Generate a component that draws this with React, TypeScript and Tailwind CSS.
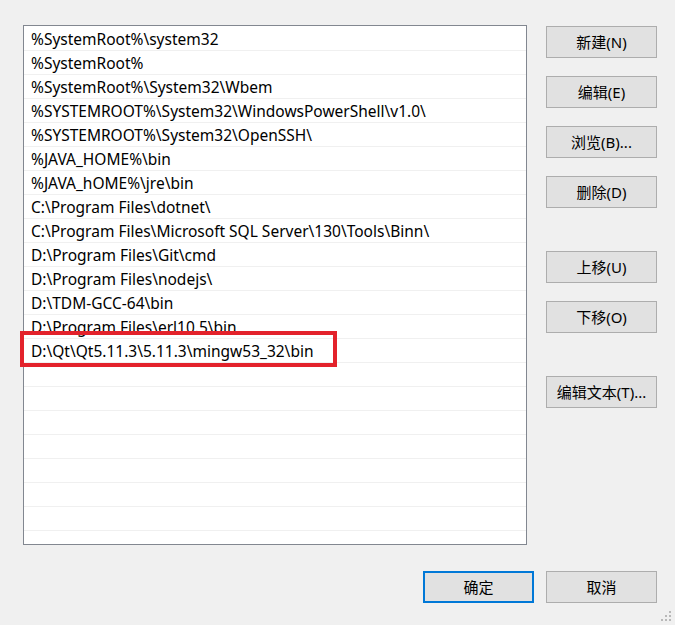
import React from 'react'

const paths = [
  '%SystemRoot%\\system32',
  '%SystemRoot%',
  '%SystemRoot%\\System32\\Wbem',
  '%SYSTEMROOT%\\System32\\WindowsPowerShell\\v1.0\\',
  '%SYSTEMROOT%\\System32\\OpenSSH\\',
  '%JAVA_HOME%\\bin',
  '%JAVA_hOME%\\jre\\bin',
  'C:\\Program Files\\dotnet\\',
  'C:\\Program Files\\Microsoft SQL Server\\130\\Tools\\Binn\\',
  'D:\\Program Files\\Git\\cmd',
  'D:\\Program Files\\nodejs\\',
  'D:\\TDM-GCC-64\\bin',
  'D:\\Program Files\\erl10.5\\bin',
  'D:\\Qt\\Qt5.11.3\\5.11.3\\mingw53_32\\bin',
  '', '', '', '', '', '', '', '',
]

const font = { fontFamily: '"Noto Sans", "Noto Sans CJK SC", sans-serif' }

function Btn({ label, primary, className = '' }: { label: string; primary?: boolean; className?: string }) {
  return (
    <button
      className={
        'w-[111px] h-[32px] bg-[#e1e1e1] text-[15px] text-black flex items-center justify-center ' +
        (primary ? 'border-2 border-[#0078d7] ' : 'border border-[#adadad] ') +
        className
      }
      style={font}
    >
      {label}
    </button>
  )
}

function Grip() {
  const dots = [
    [8, 0],
    [4, 4], [8, 4],
    [0, 8], [4, 8], [8, 8],
  ]
  return (
    <svg width="12" height="12" viewBox="0 0 12 12" className="absolute right-[3px] bottom-[3px]">
      {dots.map(([x, y]) => (
        <rect key={`${x}-${y}`} x={x + 1} y={y + 1} width="2" height="2" fill="#b8b8b8" />
      ))}
    </svg>
  )
}

export default function App() {
  return (
    <div className="relative w-[675px] h-[625px] bg-[#f0f0f0] overflow-hidden" style={font}>
      <div className="flex pl-[23px] pt-[25px]">
        <div className="w-[504px] h-[520px] bg-white border border-[#828790] overflow-hidden pt-px">
          {paths.map((p, i) => (
            <div
              key={i}
              className="h-[24px] border-b border-[#f0f0f0] pl-[7px] pt-[2px] flex items-center text-[15.5px] text-black leading-none whitespace-nowrap"
            >
              {p}
            </div>
          ))}
        </div>

        <div className="ml-[19px] pt-px flex flex-col">
          <Btn label="新建(N)" />
          <Btn label="编辑(E)" className="mt-[18px]" />
          <Btn label="浏览(B)..." className="mt-[18px]" />
          <Btn label="删除(D)" className="mt-[18px]" />
          <Btn label="上移(U)" className="mt-[43px]" />
          <Btn label="下移(O)" className="mt-[18px]" />
          <Btn label="编辑文本(T)..." className="mt-[43px]" />
        </div>
      </div>

      <div className="flex justify-end gap-[12px] pr-[18px] mt-[26px]">
        <Btn label="确定" primary />
        <Btn label="取消" />
      </div>

      <div className="absolute left-[20px] top-[331px] w-[317px] h-[36px] border-4 border-[#e3222b]" />
      <Grip />
    </div>
  )
}
